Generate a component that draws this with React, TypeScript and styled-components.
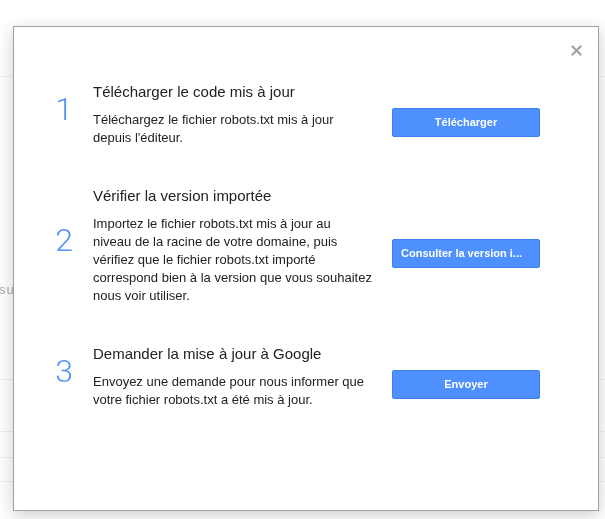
import React from "react";
import styled, { createGlobalStyle } from "styled-components";

const GlobalStyle = createGlobalStyle`
  html, body {
    margin: 0;
    padding: 0;
    background: #ffffff;
    font-family: "Liberation Sans", Arial, sans-serif;
  }
  * { box-sizing: border-box; }
`;

const Page = styled.div`
  width: 605px;
  height: 519px;
  overflow: hidden;
  background: #fff;
`;

const TopBar = styled.div`
  height: 77px;
  border-bottom: 1px solid #f0f0f0;
`;

const Summary = styled.div`
  margin-top: 204px;
  margin-left: -1px;
  font-size: 13px;
  line-height: 18px;
  color: #b0b0b0;
  letter-spacing: 1px;
`;

const Rows = styled.div`
  margin-top: 80px;
  display: flex;
  flex-direction: column;
`;

const Row = styled.div<{ $h: number }>`
  height: ${(p) => p.$h}px;
  border-top: 1px solid #efefef;
`;

const Overlay = styled.div`
  position: fixed;
  inset: 0;
  padding: 26px 0 0 13px;
`;

const Dialog = styled.div`
  position: relative;
  width: 586px;
  height: 485px;
  background: #fff;
  border: 1px solid #a0a0a0;
  box-shadow: 0 4px 16px rgba(0, 0, 0, 0.2);
  padding: 55px 0 0 30px;
`;

const Close = styled.button`
  position: absolute;
  top: 18px;
  right: 16px;
  width: 11px;
  height: 11px;
  padding: 0;
  border: 0;
  background: transparent;
  display: flex;
  align-items: center;
  justify-content: center;
  cursor: pointer;
`;

const Steps = styled.div`
  display: flex;
  flex-direction: column;
  gap: 39px;
`;

const Step = styled.div`
  display: grid;
  grid-template-columns: 40px 290px 148px;
  grid-template-rows: auto auto;
  column-gap: 9px;
  row-gap: 9px;
`;

const Num = styled.div`
  grid-column: 1;
  grid-row: 1 / span 2;
  align-self: center;
  margin-bottom: 11px;
  text-align: center;
  font-family: Roboto, "Liberation Sans", Arial, sans-serif;
  font-weight: 300;
  font-size: 32px;
  line-height: 32px;
  color: #5393f6;
`;

const Title = styled.div`
  grid-column: 2;
  grid-row: 1;
  font-size: 15px;
  line-height: 20px;
  color: #222;
  white-space: nowrap;
`;

const Body = styled.div`
  grid-column: 2;
  grid-row: 2;
  font-size: 13px;
  line-height: 18px;
  color: #222;
  white-space: nowrap;
`;

const Action = styled.button<{ $truncated?: boolean }>`
  grid-column: 3;
  grid-row: 1 / span 2;
  align-self: center;
  margin-top: 16px;
  height: 29px;
  width: 148px;
  padding: 0 8px;
  background: #4d90fe;
  border: 1px solid #3b82f0;
  border-radius: 2px;
  color: #fff;
  font-family: "Liberation Sans", Arial, sans-serif;
  font-weight: bold;
  font-size: 11px;
  line-height: 27px;
  text-align: ${(p) => (p.$truncated ? "left" : "center")};
  white-space: nowrap;
  overflow: hidden;
  cursor: pointer;
`;

type StepData = {
  n: string;
  title: string;
  lines: string[];
  action: string;
  full: string;
};

const steps: StepData[] = [
  {
    n: "1",
    title: "Télécharger le code mis à jour",
    lines: ["Téléchargez le fichier robots.txt mis à jour", "depuis l'éditeur."],
    action: "Télécharger",
    full: "Télécharger",
  },
  {
    n: "2",
    title: "Vérifier la version importée",
    lines: [
      "Importez le fichier robots.txt mis à jour au",
      "niveau de la racine de votre domaine, puis",
      "vérifiez que le fichier robots.txt importé",
      "correspond bien à la version que vous souhaitez",
      "nous voir utiliser.",
    ],
    action: "Consulter la version i...",
    full: "Consulter la version importée",
  },
  {
    n: "3",
    title: "Demander la mise à jour à Google",
    lines: [
      "Envoyez une demande pour nous informer que",
      "votre fichier robots.txt a été mis à jour.",
    ],
    action: "Envoyer",
    full: "Envoyer",
  },
];

export default function App() {
  return (
    <>
      <GlobalStyle />
      <Page>
        <TopBar />
        <Summary>su</Summary>
        <Rows>
          <Row $h={52} />
          <Row $h={26} />
          <Row $h={24} />
          <Row $h={24} />
        </Rows>
      </Page>
      <Overlay>
        <Dialog>
          <Close aria-label="Fermer">
            <svg width="11" height="11" viewBox="0 0 11 11">
              <path d="M1.5 1.5 L9.5 9.5 M9.5 1.5 L1.5 9.5" stroke="#a0a0a0" strokeWidth="2" strokeLinecap="square" />
            </svg>
          </Close>
          <Steps>
            {steps.map((s) => (
              <Step key={s.n}>
                <Num>{s.n}</Num>
                <Title>{s.title}</Title>
                <Body>
                  {s.lines.map((l, i) => (
                    <React.Fragment key={i}>
                      {l}
                      {i < s.lines.length - 1 && <br />}
                    </React.Fragment>
                  ))}
                </Body>
                <Action title={s.full} $truncated={s.action !== s.full}>
                  {s.action}
                </Action>
              </Step>
            ))}
          </Steps>
        </Dialog>
      </Overlay>
    </>
  );
}
